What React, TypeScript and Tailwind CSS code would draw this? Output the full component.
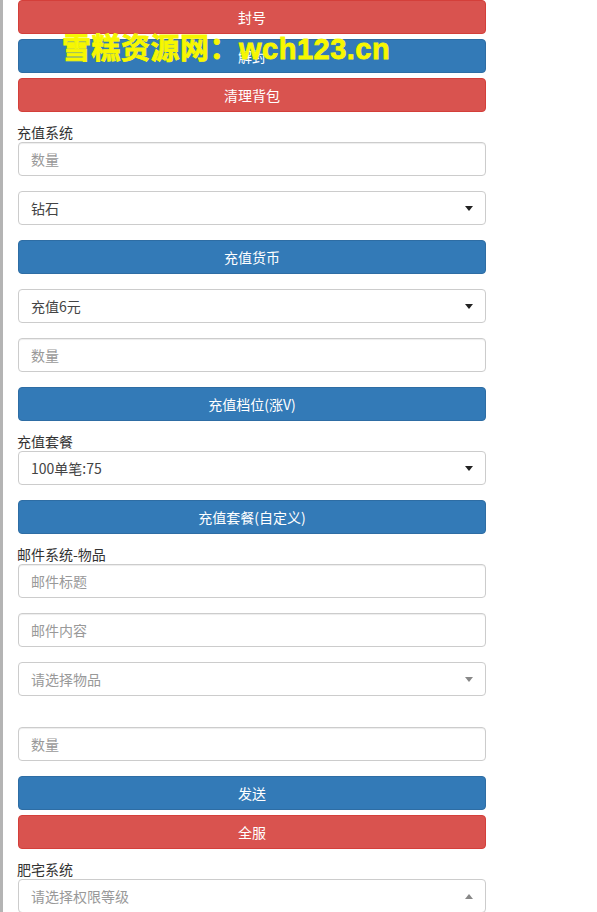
import React from 'react';

const font = { fontFamily: '"Noto Sans CJK SC", "Liberation Sans", sans-serif' };

const Btn = ({ children, red }: { children: React.ReactNode; red?: boolean }) => (
  <button
    className={
      red
        ? 'block w-full h-[34px] rounded-[4px] border border-[#d43f3a] bg-[#d9534f] text-white text-[14px]'
        : 'block w-full h-[34px] rounded-[4px] border border-[#2e6da4] bg-[#337ab7] text-white text-[14px]'
    }
  >
    {children}
  </button>
);

const Input = ({ ph }: { ph: string }) => (
  <div className="h-[34px] w-full rounded-[4px] border border-[#ccc] bg-white px-3 flex items-center text-[14px] text-[#999] shadow-[inset_0_1px_1px_rgba(0,0,0,0.075)]">
    {ph}
  </div>
);

const Select = ({ value, ph, up }: { value: string; ph?: boolean; up?: boolean }) => (
  <div className="h-[34px] w-full rounded-[4px] border border-[#ccc] bg-white pl-3 pr-[12px] flex items-center justify-between text-[14px]">
    <span className={ph ? 'text-[#999]' : 'text-[#444]'}>{value}</span>
    {up ? (
      <span className="w-0 h-0 border-x-[4px] border-x-transparent border-b-[5px] border-b-[#888]" />
    ) : (
      <span
        className={
          ph
            ? 'w-0 h-0 border-x-[4px] border-x-transparent border-t-[5px] border-t-[#888]'
            : 'w-0 h-0 border-x-[4px] border-x-transparent border-t-[5px] border-t-[#222]'
        }
      />
    )}
  </div>
);

const Label = ({ children }: { children: React.ReactNode }) => (
  <div className="h-[20px] leading-[20px] text-[14px] text-[#333] -ml-[1px]">{children}</div>
);

export default function App() {
  return (
    <div className="relative min-h-[912px] bg-white border-l-[3px] border-[#b4b4b4] overflow-hidden" style={font}>
      <div className="w-[468px] ml-[15px]">
        <Btn red>封号</Btn>
        <div className="mt-[5px]">
          <Btn>解封</Btn>
        </div>
        <div className="mt-[5px]">
          <Btn red>清理背包</Btn>
        </div>

        <div className="mt-[10px]">
          <Label>充值系统</Label>
        </div>
        <Input ph="数量" />
        <div className="mt-[15px]">
          <Select value="钻石" />
        </div>
        <div className="mt-[15px]">
          <Btn>充值货币</Btn>
        </div>
        <div className="mt-[15px]">
          <Select value="充值6元" />
        </div>
        <div className="mt-[15px]">
          <Input ph="数量" />
        </div>
        <div className="mt-[15px]">
          <Btn>充值档位(涨V)</Btn>
        </div>

        <div className="mt-[10px]">
          <Label>充值套餐</Label>
        </div>
        <Select value="100单笔:75" />
        <div className="mt-[15px]">
          <Btn>充值套餐(自定义)</Btn>
        </div>

        <div className="mt-[10px]">
          <Label>邮件系统-物品</Label>
        </div>
        <Input ph="邮件标题" />
        <div className="mt-[15px]">
          <Input ph="邮件内容" />
        </div>
        <div className="mt-[15px]">
          <Select value="请选择物品" ph />
        </div>
        <div className="mt-[31px]">
          <Input ph="数量" />
        </div>
        <div className="mt-[15px]">
          <Btn>发送</Btn>
        </div>
        <div className="mt-[5px]">
          <Btn red>全服</Btn>
        </div>

        <div className="mt-[10px]">
          <Label>肥宅系统</Label>
        </div>
        <Select value="请选择权限等级" ph up />
      </div>

      <div
        className="absolute left-[59px] top-[31px] text-[29px] font-bold text-[#f7f700] leading-[36px] whitespace-nowrap tracking-[0.5px]"
        style={{
          fontFamily: '"Liberation Sans", "Noto Sans CJK SC", sans-serif',
          WebkitTextStroke: '0.8px #f7f700',
        }}
      >
        雪糕资源网：wch123.cn
      </div>
    </div>
  );
}
